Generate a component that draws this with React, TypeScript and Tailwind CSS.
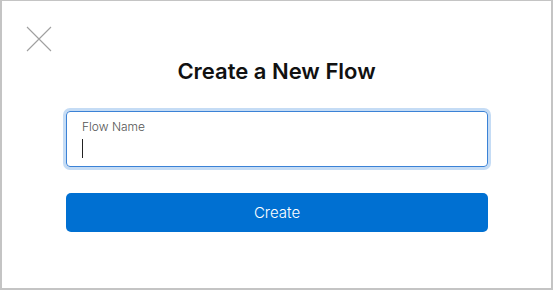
export default function App() {
  return (
    <div className="w-[553px] h-[290px] bg-white border-l-2 border-t border-r-2 border-b-2 border-[#c4c4c4] font-['Inter',sans-serif] flex flex-col">
      {/* Close */}
      <div className="pl-[24px] pt-[25px] h-[52px]">
        <svg width="26" height="26" viewBox="0 0 26 26" className="text-[#a0a0a0]">
          <path d="M1 1 L25 25 M25 1 L1 25" stroke="currentColor" strokeWidth="1.1" fill="none" />
        </svg>
      </div>

      {/* Title */}
      <h1 className="text-center text-[22px] font-semibold text-[#111] leading-[26px] mt-[5px]">
        Create a New Flow
      </h1>

      <div className="pl-[64px] pr-[63px] mt-[27px] flex flex-col">
        {/* Input */}
        <div className="h-[56px] rounded-[4px] border border-[#3b82d6] ring-[3px] ring-[#c5dcf5] px-[15px] pt-[7px]">
          <div className="text-[12px] text-[#555] leading-[16px] font-light">Flow Name</div>
          <div className="mt-[4px] w-px h-[19px] bg-[#222]" />
        </div>

        {/* Button */}
        <button className="mt-[26px] h-[39px] rounded-[5px] bg-[#0070d2] text-white text-[15px] font-light leading-none">
          Create
        </button>
      </div>
    </div>
  );
}
